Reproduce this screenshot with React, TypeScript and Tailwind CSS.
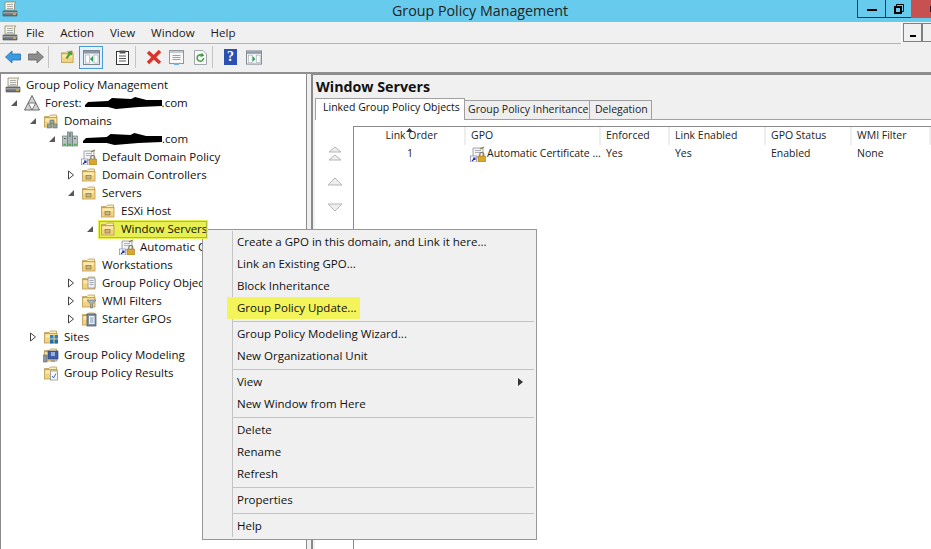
import type { ReactNode } from "react";

type Kind = "gpm" | "forest" | "folders" | "domain" | "gpo" | "ou" | "gpoFolder" | "wmi" | "starter" | "sites" | "modeling" | "results";

interface TreeRow {
  label: ReactNode;
  indent: string;
  icon: Kind;
  arrow?: "open" | "closed";
  highlight?: boolean;
}

function Blob({ width }: { width: number }): React.JSX.Element {
  return (
    <svg width={width} height="12" viewBox={`0 0 ${width} 12`} className="inline-block align-[-2px]">
      <path
        d={`M0 8 L3 5 L${width * 0.3} 4 L${width * 0.35} 1 L${width * 0.6} 2 L${width * 0.65} 0 L${width * 0.8} 3 L${width} 3 L${width} 9 L${width * 0.7} 10 L${width * 0.4} 12 L${width * 0.3} 10 L0 10 Z`}
        fill="#000"
      />
    </svg>
  );
}

function FolderShape({ fill = "#f3d27e" }: { fill?: string }): React.JSX.Element {
  return (
    <>
      <path d="M1.5 3.5 H6 L7.5 2 H13.5 V5 H1.5 Z" fill="#fbeeb6" stroke="#b89a55" strokeWidth="0.8" />
      <rect x="1.5" y="4.5" width="12.5" height="9.5" fill={fill} stroke="#b89a55" strokeWidth="0.8" />
      <rect x="2.5" y="5.5" width="10.5" height="3" fill="#fbe9ae" />
    </>
  );
}

function GpoGlyph(): React.JSX.Element {
  return (
    <>
      <path d="M3 2 H13 V11 H3 Z" fill="#f4f4f4" stroke="#8a8f98" strokeWidth="0.8" />
      <path d="M5 4.5 H11 M5 6.5 H11" stroke="#9aa0a8" strokeWidth="0.8" />
      <path d="M10 3 L14 1" stroke="#8a7a3a" strokeWidth="1.2" />
      <rect x="0.5" y="10" width="6" height="6" fill="#fff" stroke="#6a6fa8" strokeWidth="0.6" />
      <path d="M2 15 L5 12 M3 12 H5 V14" stroke="#27309a" strokeWidth="1.1" fill="none" />
      <rect x="8" y="10" width="7.5" height="6" fill="#d9a62e" stroke="#8f6c14" strokeWidth="0.5" />
      <path d="M9.8 10 V8.5 A2 2 0 0 1 13.8 8.5 V10" fill="none" stroke="#77705a" strokeWidth="1.1" />
    </>
  );
}

function GpmGlyph(): React.JSX.Element {
  return (
    <>
      <path d="M3 1 H14 L12.5 3 V9 H3 Z" fill="#f7f3dc" stroke="#8d8a70" strokeWidth="0.8" />
      <path d="M5 3.5 H11 M5 5.5 H11 M5 7.5 H11" stroke="#8a8f98" strokeWidth="0.7" />
      <path d="M1 10 H15 V15 H1 Z" fill="#6f7277" stroke="#4a4c50" strokeWidth="0.6" />
      <path d="M1 11.8 H15" stroke="#c8cacd" strokeWidth="0.8" />
      <rect x="11" y="12.5" width="3" height="1.2" fill="#e7c24a" />
    </>
  );
}

function TreeIcon({ kind }: { kind: Kind }): React.JSX.Element {
  return (
    <svg width="16" height="16" viewBox="0 0 16 16" className="shrink-0">
      {kind === "gpm" && <GpmGlyph />}
      {kind === "gpo" && <GpoGlyph />}
      {kind === "forest" && (
        <>
          <path d="M8 0.5 L15.5 15 H0.5 Z" fill="#d4d4d4" stroke="#5c5c5c" strokeWidth="0.9" />
          <path d="M4.3 8 H11.7 L8 15 Z" fill="#fff" stroke="#5c5c5c" strokeWidth="0.8" />
        </>
      )}
      {kind === "folders" && (
        <>
          <FolderShape />
          <rect x="7" y="7" width="4" height="3.5" fill="#8fa3a3" stroke="#566" strokeWidth="0.5" />
          <rect x="4.5" y="11" width="4" height="4" fill="#8fa3a3" stroke="#566" strokeWidth="0.5" />
          <rect x="10" y="11" width="4" height="4" fill="#8fa3a3" stroke="#566" strokeWidth="0.5" />
        </>
      )}
      {kind === "domain" && (
        <>
          <rect x="5.5" y="1" width="5" height="14" fill="#a4b2b2" stroke="#5e6b6b" strokeWidth="0.6" />
          <rect x="0.5" y="5" width="5" height="10" fill="#b7c2c2" stroke="#5e6b6b" strokeWidth="0.6" />
          <rect x="10.5" y="5" width="5" height="10" fill="#b7c2c2" stroke="#5e6b6b" strokeWidth="0.6" />
          <path d="M7 3 H9 M7 5 H9 M2 7.5 H4 M12 7.5 H14" stroke="#40504f" strokeWidth="0.8" />
          <path d="M1.5 13.5 H4 M6.5 13.5 H9 M12 13.5 H14.5" stroke="#3fb14a" strokeWidth="1.3" />
        </>
      )}
      {kind === "ou" && (
        <>
          <FolderShape />
          <rect x="5" y="8.5" width="5" height="3.5" fill="#c9b77c" stroke="#7c6a36" strokeWidth="0.6" />
        </>
      )}
      {kind === "gpoFolder" && (
        <>
          <FolderShape />
          <path d="M7 3 H14 V13 H7 Z" fill="#eef0f3" stroke="#858b94" strokeWidth="0.7" />
          <path d="M8.5 5.5 H12.5 M8.5 7.5 H12.5 M8.5 9.5 H12.5" stroke="#858b94" strokeWidth="0.7" />
        </>
      )}
      {kind === "wmi" && (
        <>
          <FolderShape />
          <path d="M6 7 H15 L11.5 11 V15 L9.5 15 V11 Z" fill="#a7b3bd" stroke="#5f6b75" strokeWidth="0.6" />
        </>
      )}
      {kind === "starter" && (
        <>
          <FolderShape />
          <rect x="6" y="3" width="9" height="12" fill="#7f90a8" stroke="#3f4c60" strokeWidth="0.7" />
          <rect x="8" y="5" width="5.5" height="8" fill="#f1f4f8" />
          <path d="M9 7 H12.5 M9 9 H12.5 M9 11 H12.5" stroke="#3f6aa8" strokeWidth="0.7" />
        </>
      )}
      {kind === "sites" && (
        <>
          <FolderShape />
          <rect x="7" y="6" width="3.5" height="3.5" fill="#2a83c7" />
          <rect x="11.5" y="6" width="3.5" height="3.5" fill="#2a83c7" />
          <rect x="7" y="10.5" width="3.5" height="4" fill="#1f6fb0" />
          <rect x="11.5" y="10.5" width="3.5" height="4" fill="#1f6fb0" />
        </>
      )}
      {kind === "modeling" && (
        <>
          <FolderShape />
          <rect x="0.5" y="8" width="3.5" height="7" fill="#8d969e" stroke="#555" strokeWidth="0.5" />
          <rect x="5" y="4" width="10" height="8" fill="#3d5fae" stroke="#2a3a6a" strokeWidth="0.6" />
          <path d="M8 6 H12 M8 8 H12" stroke="#fff" strokeWidth="1" />
          <rect x="8" y="12" width="4" height="3" fill="#9aa3ab" />
        </>
      )}
      {kind === "results" && (
        <>
          <FolderShape />
          <rect x="7.5" y="6" width="7" height="9" fill="#fbfbfb" stroke="#7c8189" strokeWidth="0.7" />
          <path d="M9 11 L10.5 13 L13 8.5" fill="none" stroke="#2c6fb5" strokeWidth="1" />
        </>
      )}
    </svg>
  );
}

const TREE: TreeRow[] = [
  { label: "Group Policy Management", indent: "pl-[3px]", icon: "gpm" },
  { label: <>Forest: <Blob width={77} />.com</>, indent: "pl-[6px]", icon: "forest", arrow: "open" },
  { label: "Domains", indent: "pl-[25px]", icon: "folders", arrow: "open" },
  { label: <><Blob width={79} />.com</>, indent: "pl-[44px]", icon: "domain", arrow: "open" },
  { label: "Default Domain Policy", indent: "pl-[79px]", icon: "gpo" },
  { label: "Domain Controllers", indent: "pl-[63px]", icon: "ou", arrow: "closed" },
  { label: "Servers", indent: "pl-[63px]", icon: "ou", arrow: "open" },
  { label: "ESXi Host", indent: "pl-[98px]", icon: "ou" },
  { label: "Window Servers", indent: "pl-[82px]", icon: "ou", arrow: "open", highlight: true },
  { label: "Automatic Certificate Enrollment", indent: "pl-[117px]", icon: "gpo" },
  { label: "Workstations", indent: "pl-[79px]", icon: "ou" },
  { label: "Group Policy Objects", indent: "pl-[63px]", icon: "gpoFolder", arrow: "closed" },
  { label: "WMI Filters", indent: "pl-[63px]", icon: "wmi", arrow: "closed" },
  { label: "Starter GPOs", indent: "pl-[63px]", icon: "starter", arrow: "closed" },
  { label: "Sites", indent: "pl-[25px]", icon: "sites", arrow: "closed" },
  { label: "Group Policy Modeling", indent: "pl-[41px]", icon: "modeling" },
  { label: "Group Policy Results", indent: "pl-[41px]", icon: "results" },
];

function Arrow({ type }: { type?: "open" | "closed" }): React.JSX.Element {
  return (
    <span className="flex h-[18px] w-[16px] shrink-0 items-center pl-[2px]">
      {type === "open" && (
        <svg width="8" height="8" viewBox="0 0 8 8">
          <path d="M7 1 V7 H1 Z" fill="#595959" />
        </svg>
      )}
      {type === "closed" && (
        <svg width="8" height="10" viewBox="0 0 8 10">
          <path d="M1.5 1 L6.5 5 L1.5 9 Z" fill="#fff" stroke="#444" strokeWidth="1" />
        </svg>
      )}
    </span>
  );
}

const MENU: (string | null)[] = [
  "Create a GPO in this domain, and Link it here...",
  "Link an Existing GPO...",
  "Block Inheritance",
  "Group Policy Update...",
  null,
  "Group Policy Modeling Wizard...",
  "New Organizational Unit",
  null,
  "View",
  "New Window from Here",
  null,
  "Delete",
  "Rename",
  "Refresh",
  null,
  "Properties",
  null,
  "Help",
];

const COLUMNS = [
  { title: "Link Order", width: "w-[112px]", center: true },
  { title: "GPO", width: "w-[135px]" },
  { title: "Enforced", width: "w-[69px]" },
  { title: "Link Enabled", width: "w-[96px]" },
  { title: "GPO Status", width: "w-[86px]" },
  { title: "WMI Filter", width: "flex-1" },
];

function ToolButton({ children, className = "" }: { children: ReactNode; className?: string }): React.JSX.Element {
  return <span className={`flex shrink-0 items-center justify-center ${className}`}>{children}</span>;
}

function Divider(): React.JSX.Element {
  return <span className="block h-[22px] w-px shrink-0 bg-[#c4c4c4]" />;
}

function PaneIcon({ dir }: { dir: "left" | "right" }): React.JSX.Element {
  return (
    <svg width="17" height="15" viewBox="0 0 17 15">
      <rect x="0.5" y="0.5" width="16" height="14" fill="#eef2f6" stroke="#7d8791" />
      <rect x="1" y="1" width="15" height="2.5" fill="#8d98a3" />
      <rect x="2.5" y="5" width="4" height="8" fill="#fff" stroke="#9aa3ac" strokeWidth="0.6" />
      <rect x="11" y="5" width="4" height="8" fill="#fff" stroke="#9aa3ac" strokeWidth="0.6" />
      <path d={dir === "left" ? "M10 6 L7 9 L10 12 Z" : "M7 6 L10 9 L7 12 Z"} fill="#2f9a52" />
    </svg>
  );
}

function Toolbar(): React.JSX.Element {
  return (
    <div className="flex h-[30px] shrink-0 items-center border-b-2 border-b-[#8f8f8f] pl-[5px] pb-[2px]">
      <ToolButton className="w-[16px]">
        <svg width="16" height="14" viewBox="0 0 16 14">
          <path d="M0.5 7 L7 1 V4 H15.5 V10 H7 V13 Z" fill="#3b9be0" stroke="#1f6fb4" strokeWidth="0.8" />
        </svg>
      </ToolButton>
      <ToolButton className="ml-[7px] w-[16px]">
        <svg width="16" height="14" viewBox="0 0 16 14">
          <path d="M15.5 7 L9 1 V4 H0.5 V10 H9 V13 Z" fill="#8c8c8c" stroke="#666" strokeWidth="0.8" />
        </svg>
      </ToolButton>
      <span className="ml-[4px]"><Divider /></span>
      <ToolButton className="ml-[11px] w-[15px]">
        <svg width="15" height="16" viewBox="0 0 16 16">
          <FolderShape />
          <path d="M6 9 L9 4 L7.5 3.5 L12.5 1 L13 6.5 L11 5.5 L8 10 Z" fill="#4a9e3c" />
        </svg>
      </ToolButton>
      <ToolButton className="ml-[4px] h-[23px] w-[24px] border border-[#4a9ad4] bg-[#e5f1fa]">
        <PaneIcon dir="left" />
      </ToolButton>
      <ToolButton className="ml-[12px] w-[14px]">
        <svg width="13" height="15" viewBox="0 0 13 15">
          <rect x="0.5" y="1.5" width="12" height="13" fill="#fff" stroke="#333" />
          <rect x="3.5" y="0.5" width="6" height="3" fill="#555" />
          <path d="M3 6 H10 M3 8.5 H10 M3 11 H10" stroke="#555" />
        </svg>
      </ToolButton>
      <span className="ml-[6px]"><Divider /></span>
      <ToolButton className="ml-[10px] w-[16px]">
        <svg width="16" height="16" viewBox="0 0 16 16">
          <path d="M2 3 L14 14 M14 2 L2 14" stroke="#d7342a" strokeWidth="3.4" />
        </svg>
      </ToolButton>
      <ToolButton className="ml-[7px] w-[15px]">
        <svg width="15" height="15" viewBox="0 0 15 15">
          <rect x="0.5" y="0.5" width="14" height="13" fill="#f7f7f7" stroke="#8f969c" />
          <rect x="1" y="1" width="13" height="2" fill="#c3c8cc" />
          <path d="M3.5 5.5 H11.5 M3.5 7.5 H11.5 M3.5 9.5 H11.5" stroke="#9aa2a9" />
          <rect x="5" y="13" width="5" height="2" fill="#6cb1e0" />
        </svg>
      </ToolButton>
      <ToolButton className="ml-[10px] w-[13px]">
        <svg width="13" height="15" viewBox="0 0 13 15">
          <path d="M0.5 0.5 H9 L12.5 4 V14.5 H0.5 Z" fill="#f8f8f8" stroke="#a2a7ab" />
          <path d="M9.5 8 A3.2 3.2 0 1 1 8 5.3 M7.5 3.5 L9 5.5 L6.5 6.3" fill="none" stroke="#3c9a3f" strokeWidth="1.4" />
        </svg>
      </ToolButton>
      <span className="ml-[5px]"><Divider /></span>
      <ToolButton className="ml-[11px] w-[13px]">
        <span className="flex h-[16px] w-[13px] items-center justify-center bg-[#2b50b0] font-['Liberation_Serif',serif] text-[14px] font-bold leading-none text-white">?</span>
      </ToolButton>
      <ToolButton className="ml-[9px] w-[16px]">
        <PaneIcon dir="right" />
      </ToolButton>
    </div>
  );
}

function Stepper({ d }: { d: string }): React.JSX.Element {
  return (
    <svg width="16" height="16" viewBox="0 0 16 16">
      <path d={d} fill="#eeeeee" stroke="#b5b5b5" strokeWidth="1" />
    </svg>
  );
}

function DetailPane(): React.JSX.Element {
  return (
    <div className="flex min-w-0 flex-1 flex-col border-l-2 border-t border-[#8a8a8a] pl-[2px]">
      <div className="h-[23px] pl-px text-[14.25px] font-bold leading-[23px] text-[#111]">Window Servers</div>
      <div className="flex h-[22px] items-end whitespace-nowrap border-b border-[#a0a0a0] text-[10.5px]">
        <span className="relative -mb-px flex h-[22px] w-[150px] items-center border border-b-0 border-[#a0a0a0] bg-white pb-[3px] pl-[7px] text-[#111]">Linked Group Policy Objects</span>
        <span className="flex h-[19px] w-[125px] items-center border-r border-t border-[#a0a0a0] bg-[#eeeeee] pl-[3px] text-[#222]">Group Policy Inheritance</span>
        <span className="flex h-[19px] w-[62px] items-center border-r border-t border-[#a0a0a0] bg-[#eeeeee] pl-[5px] text-[#222]">Delegation</span>
      </div>
      <div className="flex flex-1 bg-white pt-[6px] text-[10.5px]">
        <div className="flex w-[38px] shrink-0 flex-col items-center pt-[20px] pl-[1px]">
          <Stepper d="M8 1 L14 6 H2 Z M2 14 L8 9 L14 14 H2 Z" />
          <span className="mt-[12px]"><Stepper d="M8 4 L15 11 H1 Z" /></span>
          <span className="mt-[10px]"><Stepper d="M1 4 H15 L8 11 Z" /></span>
        </div>
        <div className="flex min-w-0 flex-1 flex-col border-l border-t border-[#8a8a8a]">
          <div className="flex h-[18px] shrink-0">
            {COLUMNS.map((c) => (
              <span
                key={c.title}
                className={`relative flex items-center border-r-2 border-r-[#eeeeee] pl-[5px] text-[#222] ${c.width} ${c.center ? "justify-center pl-0" : ""}`}
              >
                {c.title}
                {c.center && (
                  <svg width="7" height="5" viewBox="0 0 7 5" className="absolute left-[52px] top-[1px]">
                    <path d="M3.5 0 L7 4 H0 Z" fill="#333" />
                  </svg>
                )}
              </span>
            ))}
          </div>
          <div className="flex h-[18px] shrink-0 items-center text-[#222]">
            <span className="w-[112px] text-center">1</span>
            <span className="flex w-[135px] items-center gap-[1px] pl-[4px]">
              <TreeIcon kind="gpo" />
              <span className="whitespace-nowrap">Automatic Certificate ...</span>
            </span>
            <span className="w-[69px] pl-[5px]">Yes</span>
            <span className="w-[96px] pl-[5px]">Yes</span>
            <span className="w-[86px] pl-[5px]">Enabled</span>
            <span className="pl-[5px]">None</span>
          </div>
        </div>
      </div>
    </div>
  );
}

export default function App(): React.JSX.Element {
  return (
    <div className="relative flex h-[549px] w-[931px] flex-col overflow-hidden bg-[#f0f0f0] font-['Open_Sans',sans-serif] text-[11.5px] text-[#111]">
      <header className="flex h-[22px] shrink-0 items-start bg-[#66cbec]">
        <span className="ml-[2px] mt-[1px]"><TreeIcon kind="gpm" /></span>
        <span className="flex-1 pl-[374px] text-[14.25px] leading-[22px] text-[#222]">Group Policy Management</span>
        <span className="flex h-[18px] w-[28px] items-center justify-center border-b border-l border-[#333]">
          <span className="mt-[3px] h-[2px] w-[10px] bg-black" />
        </span>
        <span className="flex h-[18px] w-[26px] items-center justify-center border-b border-l border-[#333]">
          <svg width="10" height="10" viewBox="0 0 10 10">
            <path d="M2.5 2.5 V0.5 H9.5 V7.5 H7.5" fill="none" stroke="#000" />
            <rect x="1" y="3" width="6" height="6" fill="none" stroke="#000" strokeWidth="2" />
          </svg>
        </span>
        <span className="flex h-[18px] w-[20px] items-center justify-end bg-[#c75050]">
          <span className="h-[6px] w-px bg-[#222]" />
        </span>
      </header>

      <div className="flex h-[22px] shrink-0 items-stretch">
        <div className="flex flex-1 items-center border-b border-[#b4b4b4] pl-[2px]">
          <TreeIcon kind="gpm" />
          <nav className="ml-[8px] flex gap-[16px] text-[#1a1a1a]">
            <span>File</span>
            <span>Action</span>
            <span>View</span>
            <span>Window</span>
            <span>Help</span>
          </nav>
        </div>
        <div className="flex items-start border-l border-white pl-px pt-px">
          <span className="flex h-[19px] w-[19px] items-end justify-center border border-[#808080] pb-[4px]">
            <span className="h-[2px] w-[6px] bg-black" />
          </span>
          <span className="h-[19px] w-[9px] border-y border-l border-[#808080]" />
        </div>
      </div>

      <Toolbar />

      <main className="flex min-h-0 flex-1">
        <section className="w-[307px] shrink-0 border-x border-[#8a8a8a] bg-white pl-px pt-[2px]">
          <ul>
            {TREE.map((row, i) => (
              <li key={i} className={`flex h-[18px] items-center whitespace-nowrap ${row.indent}`}>
                {row.arrow && <Arrow type={row.arrow} />}
                {row.highlight ? (
                  <span className="relative z-20 -ml-[2px] flex h-[19px] items-center bg-[#e8ef52] pl-[2px] pr-px outline outline-1 -outline-offset-2 outline-[#a8bc4a]">
                    <TreeIcon kind={row.icon} />
                    <span className="pl-[5px]">{row.label}</span>
                  </span>
                ) : (
                  <>
                    <TreeIcon kind={row.icon} />
                    <span className="pl-[5px]">{row.label}</span>
                  </>
                )}
              </li>
            ))}
          </ul>
        </section>
        <div className="w-[4px] shrink-0" />
        <DetailPane />
      </main>

      <div className="absolute left-[202px] top-[229px] z-10 w-[335px] whitespace-nowrap border border-[#979797] bg-[#f0f0f0] pb-[2px] pl-[2px] pr-[2px] pt-[1px] text-[#111]">
        <div className="ml-[27px] border-l border-[#c4c4c4]">
          {MENU.map((item, i) =>
            item === null ? (
              <div key={i} className="flex h-[4px] items-center"><span className="h-px w-full bg-[#c4c4c4]" /></div>
            ) : (
              <div key={i} className="flex h-[22px] items-center justify-between pl-[4px] pr-[11px]">
                <span className={item === "Group Policy Update..." ? "-ml-[10px] flex h-[22px] w-[133px] items-center bg-[#f3f35a] pl-[10px]" : ""}>{item}</span>
                {item === "View" && (
                  <svg width="5" height="8" viewBox="0 0 5 8">
                    <path d="M0 0 L5 4 L0 8 Z" fill="#333" />
                  </svg>
                )}
              </div>
            ),
          )}
        </div>
      </div>
    </div>
  );
}
